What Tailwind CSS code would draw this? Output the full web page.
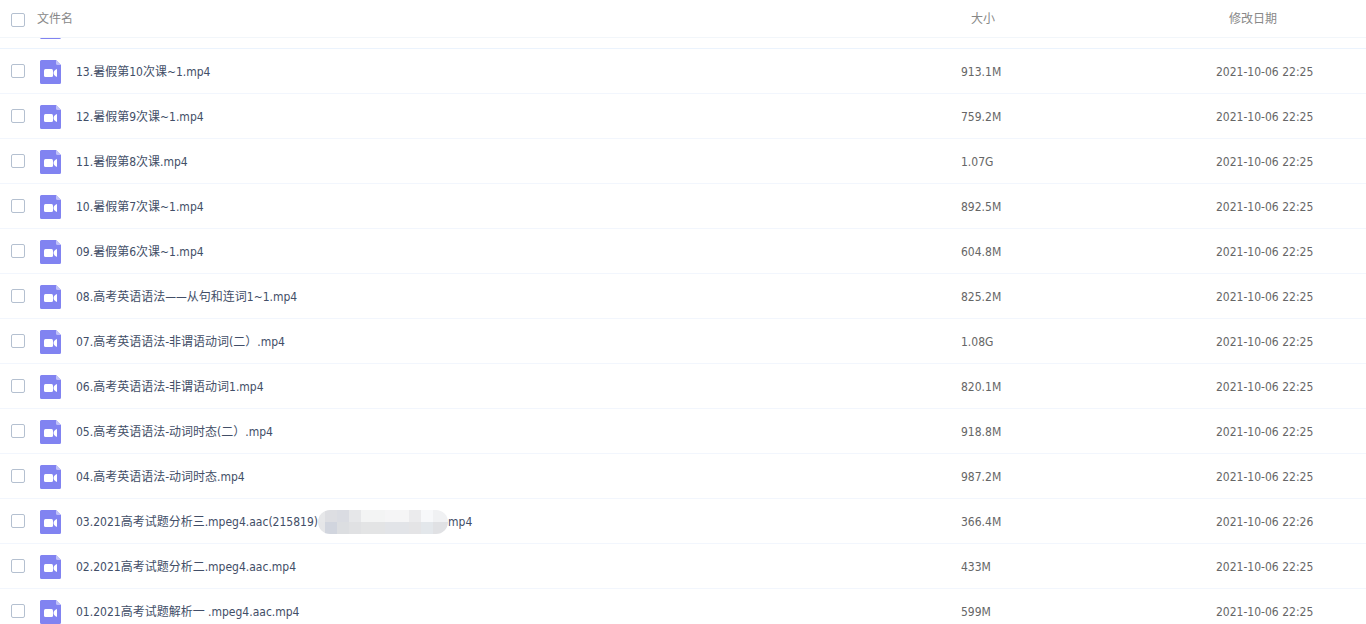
<!DOCTYPE html>
<html lang="zh-CN">
<head>
  <meta charset="UTF-8" />
  <meta name="viewport" content="width=device-width, initial-scale=1.0" />
  <title>文件列表</title>
  <script src="https://cdn.jsdelivr.net/npm/@tailwindcss/browser@4"></script>
</head>
<body class="h-screen overflow-hidden bg-white font-['DejaVu_Sans_Condensed','Noto_Sans_CJK_SC',sans-serif] text-xs text-[#424e67]">
  <!-- Video file icon -->
  <svg class="hidden">
    <symbol id="icon-video" viewBox="0 0 21 24">
      <path fill="#8183f1" d="M1.5 0H16l5 5v17.500a1.500 1.500 0 0 1-1.500 1.500h-18A1.500 1.500 0 0 1 0 22.500v-21A1.500 1.500 0 0 1 1.500 0z" />
      <path fill="#c0c1f8" d="M16 0l5 5h-3.500A1.500 1.500 0 0 1 16 3.500z" />
      <rect x="4" y="9" width="9" height="8" rx="1.500" fill="#fff" />
      <path fill="#fff" d="M17 9v8q-3.500-1.500-3.500-4t3.500-4z" />
    </symbol>
  </svg>

  <table class="w-full table-fixed border-collapse text-left">
    <thead>
      <tr class="h-[37px] border-b border-[#f2f6fa] text-[#888888]">
        <th class="w-9 pt-[3px] pl-[11px] font-normal">
          <input type="checkbox" aria-label="全选" class="block size-[14px] appearance-none rounded-xs border border-[#b4c0d0] bg-white checked:bg-[#8183f1]" />
        </th>
        <th class="pt-px pl-px font-normal">文件名</th>
        <th class="w-[255px] pt-px pl-[10px] font-normal">大小</th>
        <th class="w-[150px] pt-px pl-[13px] font-normal">修改日期</th>
      </tr>
    </thead>
    <tbody id="file-list">
      <!-- Row scrolled under the header -->
      <tr class="border-b border-[#ebf3fd]">
        <td></td>
        <td class="pl-1" colspan="3">
          <div class="flex h-[10px] items-start overflow-hidden">
            <svg class="-mt-[23px] h-6 w-[21px] shrink-0"><use href="#icon-video" /></svg>
          </div>
        </td>
      </tr>
    </tbody>
  </table>

  <template id="mosaic">
    <span class="inline-grid h-6 w-[130px] grid-cols-[7px_12px_12px_12px_24px_24px_12px_12px_15px] grid-rows-2 overflow-hidden rounded-full align-middle">
      <span class="bg-[#e6e7e9]"></span><span class="bg-[#dddee2]"></span><span class="bg-[#dadce2]"></span><span class="bg-[#e6e7e9]"></span><span class="bg-[#f3f4f4]"></span><span class="bg-[#f5f5f6]"></span><span class="bg-[#ebebed]"></span><span class="bg-[#f7f8fa]"></span><span class="bg-[#f0f1f3]"></span>
      <span class="bg-[#e5e6e8]"></span><span class="bg-[#d1d5de]"></span><span class="bg-[#dcdee1]"></span><span class="bg-[#e0e1e3]"></span><span class="bg-[#e3e4e5]"></span><span class="bg-[#e2e4e8]"></span><span class="bg-[#e4e4e6]"></span><span class="bg-[#e3e7eb]"></span><span class="bg-[#e0e1e4]"></span>
    </span>
  </template>

  <script>
    const files = [
      ['13.暑假第10次课~1.mp4', '913.1M', '2021-10-06 22:25'],
      ['12.暑假第9次课~1.mp4', '759.2M', '2021-10-06 22:25'],
      ['11.暑假第8次课.mp4', '1.07G', '2021-10-06 22:25'],
      ['10.暑假第7次课~1.mp4', '892.5M', '2021-10-06 22:25'],
      ['09.暑假第6次课~1.mp4', '604.8M', '2021-10-06 22:25'],
      ['08.高考英语语法——从句和连词1~1.mp4', '825.2M', '2021-10-06 22:25'],
      ['07.高考英语语法-非谓语动词(二）.mp4', '1.08G', '2021-10-06 22:25'],
      ['06.高考英语语法-非谓语动词1.mp4', '820.1M', '2021-10-06 22:25'],
      ['05.高考英语语法-动词时态(二）.mp4', '918.8M', '2021-10-06 22:25'],
      ['04.高考英语语法-动词时态.mp4', '987.2M', '2021-10-06 22:25'],
      ['03.2021高考试题分析三.mpeg4.aac(215819)|mp4', '366.4M', '2021-10-06 22:26'],
      ['02.2021高考试题分析二.mpeg4.aac.mp4', '433M', '2021-10-06 22:25'],
      ['01.2021高考试题解析一 .mpeg4.aac.mp4', '599M', '2021-10-06 22:25'],
    ];
    const list = document.getElementById('file-list');
    // "|" marks the hidden part of a name
    const mosaic = document.getElementById('mosaic').innerHTML.trim();

    files.forEach(([name, size, date], i) => {
      list.insertAdjacentHTML('beforeend', `
        <tr class="h-[45px] border-b border-[#f2f6fd] hover:bg-[#f7fafe]">
          <td class="pl-[11px]">
            <input type="checkbox" id="file-${i}" class="block size-[14px] appearance-none rounded-xs border border-[#b4c0d0] bg-white checked:bg-[#8183f1]" />
          </td>
          <td class="pt-0.5 pl-1">
            <div class="flex items-center gap-[15px]">
              <svg class="h-6 w-[21px] shrink-0"><use href="#icon-video" /></svg>
              <label for="file-${i}" class="flex items-center whitespace-pre">${name.replace('|', mosaic)}</label>
            </div>
          </td>
          <td class="pt-0.5 text-[#666666]">${size}</td>
          <td class="pt-0.5 text-[#666666]">${date}</td>
        </tr>`);
    });
  </script>
</body>
</html>
